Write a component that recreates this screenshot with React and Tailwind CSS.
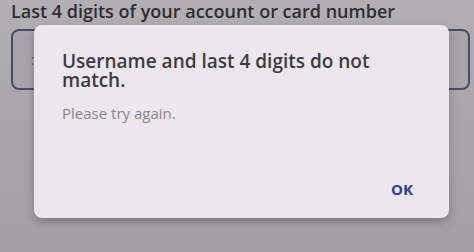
export default function App() {
  return (
    <div
      className="relative h-[252px] w-[474px] overflow-hidden bg-[linear-gradient(180deg,#b3b0b3_0%,#aaa7aa_40%,#a4a1a4_100%)]"
      style={{ fontFamily: '"Open Sans", "Noto Sans", sans-serif' }}
    >
      <div className="pl-[11px] text-[18px] font-semibold leading-[22px] text-[#2e2d33]">
        Last 4 digits of your account or card number
      </div>
      <div className="ml-[11px] mr-[4px] mt-[7px] h-[61px] rounded-lg border-2 border-[#4c4a6c] bg-[#a8a5a8]">
        <div className="pl-[18px] pt-[18px] text-[14px] text-[#6c6970]">:</div>
      </div>

      <div className="absolute left-[34px] top-[25px] flex h-[193px] w-[415px] flex-col rounded-lg bg-[#ece7ed] pl-[28px] pr-[36px] shadow-[0_4px_10px_rgba(0,0,0,0.25)]">
        <h2 className="mt-[27px] text-[19px] font-semibold leading-[19px] text-[#3d3a44]">
          Username and last 4 digits do not match.
        </h2>
        <p className="mt-[14px] text-[15px] leading-[18px] text-[#8a8690]">Please try again.</p>
        <div className="mt-auto mb-[21px] flex justify-end">
          <button className="text-[15px] font-bold leading-[16px] text-[#2c3f9c]">OK</button>
        </div>
      </div>
    </div>
  )
}
